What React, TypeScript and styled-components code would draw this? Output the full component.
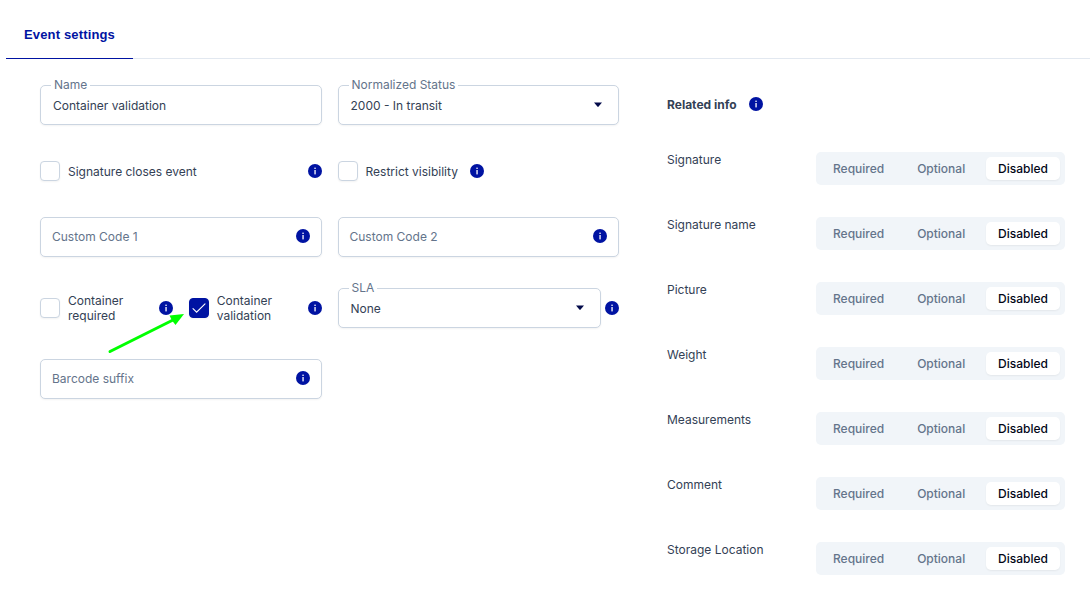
import React from 'react';
import styled, { createGlobalStyle } from 'styled-components';

const GlobalStyle = createGlobalStyle`
  * {
    box-sizing: border-box;
  }

  body {
    margin: 0;
    background: #ffffff;
    color: #334155;
    font-family: Inter, sans-serif;
    font-size: 12px;
    line-height: 15px;
  }
`

const Page = styled.main`
  height: 592px;
  padding-left: 6px;
  overflow: hidden;
`

const TabList = styled.nav`
  display: flex;
  height: 59px;
  border-bottom: 1px solid #e2e8f0;
`

const Tab = styled.button`
  width: 127px;
  height: 59px;
  padding: 10px 0 0;
  border: none;
  border-bottom: 1px solid #0013a2;
  background: none;
  color: #0013a2;
  font: 700 13px/15px "Liberation Sans", Arial, sans-serif;
  letter-spacing: 0.15px;
`

const Content = styled.div`
  display: flex;
  gap: 48px;
  padding: 26px 25px 0 34px;
`

const Form = styled.div`
  position: relative;
  display: grid;
  flex: none;
  width: 579px;
  grid-template-columns: 1fr 1fr;
  grid-template-rows: 40px 40px 45px 45px 40px;
  gap: 26px 16px;
  align-content: start;
`

const Split = styled.div`
  display: grid;
  grid-template-columns: 1fr 1fr;
  gap: 16px;
  height: 40px;
`

const WithInfo = styled.div`
  display: flex;
  align-items: center;
  gap: 4px;
  height: 40px;
`

const FieldBox = styled.div`
  position: relative;
  display: flex;
  flex: 1;
  align-items: center;
  justify-content: space-between;
  height: 40px;
  padding: 0 11px 0 12px;
  border: 1px solid #cbd5e1;
  border-radius: 5px;
  background: #ffffff;
  box-shadow: 0 1px 2px rgba(18, 18, 23, 0.05);
`

const FloatLabel = styled.span`
  position: absolute;
  top: -9px;
  left: 10px;
  padding: 0 3px;
  background: #ffffff;
  color: #64748b;
`

const Placeholder = styled.span`
  margin: 0 0 2px -1px;
  color: #64748b;
`

const FieldInfo = styled.span`
  display: flex;
  margin-bottom: 2px;
`

const Arrow = styled.svg`
  margin-right: 4px;
`

const CheckRow = styled.label<{ $spread?: boolean }>`
  display: flex;
  align-items: center;
  height: 40px;
  gap: ${({ $spread }) => ($spread ? '8px' : '12px')};
  justify-content: ${({ $spread }) => ($spread ? 'space-between' : 'flex-start')};
`

const CheckText = styled.span`
  display: flex;
  align-items: center;
  gap: 8px;
`

const Box = styled.span<{ $checked?: boolean }>`
  display: flex;
  flex: none;
  align-items: center;
  justify-content: center;
  width: 20px;
  height: 20px;
  border: 1px solid ${({ $checked }) => ($checked ? '#0013a2' : '#cbd5e1')};
  border-radius: 4px;
  background: ${({ $checked }) => ($checked ? '#0013a2' : '#ffffff')};
  box-shadow: 0 1px 2px rgba(18, 18, 23, 0.05);
`

const Pointer = styled.svg`
  position: absolute;
  top: 225px;
  left: 66px;
`

const Related = styled.section`
  flex: 1;
`

const RelatedTitle = styled.h2`
  display: flex;
  align-items: center;
  gap: 12px;
  height: 38px;
  margin: 0 0 29px;
  font-size: 12px;
  font-weight: 700;
`

const RelatedRow = styled.div`
  display: flex;
  justify-content: space-between;
  height: 65px;
`

const Segments = styled.div`
  display: flex;
  justify-content: space-between;
  width: 249px;
  height: 33px;
  padding: 5px;
  border-radius: 5px;
  background: #f1f5f9;
`

const Segment = styled.button<{ $active: boolean }>`
  height: 23px;
  padding: 0 12px;
  border: none;
  border-radius: 5px;
  background: ${({ $active }) => ($active ? '#ffffff' : 'transparent')};
  box-shadow: ${({ $active }) => ($active ? '0 1px 2px rgba(0, 0, 0, 0.06)' : 'none')};
  color: ${({ $active }) => ($active ? '#020617' : '#64748b')};
  font: 500 12px/15px Inter, sans-serif;
`

const InfoSvg = styled.svg`
  flex: none;
`

const InfoIcon = () => (
  <InfoSvg width="14" height="14" viewBox="0 0 14 14">
    <circle cx="7" cy="7" r="7" fill="#0013a2" />
    <rect x="6.4" y="3.6" width="1.3" height="1.4" fill="#fff" />
    <rect x="6.4" y="6" width="1.3" height="4.4" fill="#fff" />
  </InfoSvg>
)

interface FieldProps {
  label: string,
  value?: string,
  select?: boolean,
  info?: boolean
}

const Field: React.FC<FieldProps> = ({ label, value, select, info }) => (
  <FieldBox>
    {value ? <FloatLabel>{label}</FloatLabel> : <Placeholder>{label}</Placeholder>}
    {value && <span>{value}</span>}
    {select && (
      <Arrow width="10" height="6" viewBox="0 0 10 6">
        <path d="M1 .5h8L5.6 4.6a.8.8 0 0 1-1.2 0z" fill="#030a4a" />
      </Arrow>
    )}
    {info && <FieldInfo><InfoIcon /></FieldInfo>}
  </FieldBox>
)

interface CheckProps {
  label: string,
  checked?: boolean,
  spread?: boolean
}

const Check: React.FC<CheckProps> = ({ label, checked, spread }) => (
  <CheckRow $spread={spread}>
    <CheckText>
      <Box $checked={checked}>
        {checked && (
          <svg width="14" height="14" viewBox="0 0 14 14" fill="none">
            <path d="M1 7.6 4.6 11.2 13 2.8" stroke="#fff" strokeWidth="1.1" strokeLinecap="round" />
          </svg>
        )}
      </Box>
      <span>{label}</span>
    </CheckText>
    <InfoIcon />
  </CheckRow>
)

const options = ['Required', 'Optional', 'Disabled']
const related = ['Signature', 'Signature name', 'Picture', 'Weight', 'Measurements', 'Comment', 'Storage Location']

export default function App() {
  return (
    <Page>
      <GlobalStyle />
      <TabList>
        <Tab>Event settings</Tab>
      </TabList>
      <Content>
        <Form>
          <Field label="Name" value="Container validation" />
          <Field label="Normalized Status" value="2000 - In transit" select />
          <Check label="Signature closes event" spread />
          <Check label="Restrict visibility" />
          <Field label="Custom Code 1" info />
          <Field label="Custom Code 2" info />
          <Split>
            <Check label="Container required" spread />
            <Check label="Container validation" checked spread />
          </Split>
          <WithInfo>
            <Field label="SLA" value="None" select />
            <InfoIcon />
          </WithInfo>
          <Field label="Barcode suffix" info />
          <Pointer width="80" height="46" viewBox="0 0 80 46">
            <path d="M4 41.5 68 9.5" stroke="#00ff00" strokeWidth="3" strokeLinecap="round" />
            <path d="M78 4 63.5 5.5 66 10.5 69.5 15z" fill="#00ff00" />
          </Pointer>
        </Form>
        <Related>
          <RelatedTitle>
            Related info
            <InfoIcon />
          </RelatedTitle>
          {related.map((name) => (
            <RelatedRow key={name}>
              <span>{name}</span>
              <Segments>
                {options.map((option) => (
                  <Segment key={option} $active={option === 'Disabled'}>{option}</Segment>
                ))}
              </Segments>
            </RelatedRow>
          ))}
        </Related>
      </Content>
    </Page>
  )
}
